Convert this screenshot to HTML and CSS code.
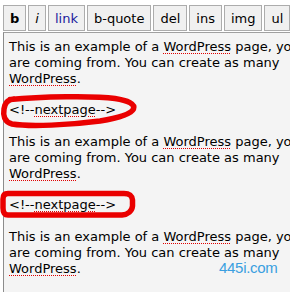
FILE: index.html
```html
<!DOCTYPE html>
<html>
<head>
<meta charset="utf-8">
<link rel="stylesheet" href="styles.css">
</head>
<body>
<div class="toolbar">
  <span class="btn btn-b">b</span>
  <span class="btn btn-i">i</span>
  <span class="btn btn-link">link</span>
  <span class="btn">b-quote</span>
  <span class="btn">del</span>
  <span class="btn">ins</span>
  <span class="btn">img</span>
  <span class="btn">ul</span>
  <span class="btn">ol</span>
</div>
<div class="editor">
<div class="line">This is an example of a <span class="sp">WordPress</span> page, you could edit this to put information about yourself or your site so readers know where you</div>
<div class="line">are coming from. You can create as many</div>
<div class="line"><span class="sp">WordPress</span>.</div>
<div class="line blank"></div>
<div class="line">&lt;!--<span class="sp">nextpage</span>--&gt;</div>
<div class="line blank"></div>
<div class="line">This is an example of a <span class="sp">WordPress</span> page, you could edit this to put information about yourself or your site so readers know where you</div>
<div class="line">are coming from. You can create as many</div>
<div class="line"><span class="sp">WordPress</span>.</div>
<div class="line blank"></div>
<div class="line">&lt;!--<span class="sp">nextpage</span>--&gt;</div>
<div class="line blank"></div>
<div class="line">This is an example of a <span class="sp">WordPress</span> page, you could edit this to put information about yourself or your site so readers know where you</div>
<div class="line">are coming from. You can create as many</div>
<div class="line"><span class="sp">WordPress</span>.</div>
</div>
<svg class="mark" width="290" height="292" viewBox="0 0 290 292">
  <path d="M10 99.5 C40 96.5 95 95.5 115 98.5 C128 100.5 135.5 104 133.5 109 C131 114 118 118 100 121 C70 125 30 127 12 124 C4 122 3 115 4 109 C5 103 7 100 14 99" />
  <path d="M8 193.5 L124 193.5 C130 193.5 132 196 132.5 200 L132.5 206 C132 211 128 214.5 122 215 L8 215 C4 215 3 212 3 208 L3 199 C3 195 5 193.5 8 193.5 Z" />
</svg>
<div class="watermark">445i.com</div>
</body>
</html>
```

FILE: styles.css
```css
html, body {
  margin: 0;
  padding: 0;
  background: #ffffff;
  width: 290px;
  height: 292px;
  overflow: hidden;
}
body {
  position: relative;
  font-family: "DejaVu Sans", Verdana, sans-serif;
  font-size: 13px;
  color: #000;
}
.toolbar {
  display: flex;
  gap: 2px;
  padding: 5px 0 0 3px;
  white-space: nowrap;
}
.btn {
  flex: none;
  display: flex;
  align-items: center;
  height: 24px;
  padding: 0 6px;
  border: 1px solid #acacac;
  background: #f0f0f0;
  color: #000;
}
.btn-b { font-weight: bold; }
.btn-i { font-style: italic; }
.btn-link { color: #1a1a9c; }
.editor {
  margin: 1px 0 0 3px;
  border-top: 1px solid #a0a0a0;
  border-left: 1px solid #8c8c8c;
  background: #f4f4f4;
  padding: 6px 0 0 5px;
  height: 300px;
  white-space: nowrap;
}
.line {
  line-height: 15.85px;
  height: 15.85px;
}
.sp {
  text-decoration: underline dotted #e00000;
  text-decoration-thickness: 1px;
  text-underline-offset: 2px;
}
.mark {
  position: absolute;
  left: 0;
  top: 0;
}
.mark path {
  fill: none;
  stroke: #ea0000;
  stroke-width: 5.5;
  stroke-linecap: round;
  stroke-linejoin: round;
}
.watermark {
  position: absolute;
  left: 219px;
  top: 259px;
  font-family: "Liberation Sans", Arial, sans-serif;
  font-size: 15px;
  letter-spacing: -0.3px;
  color: #3a9fe0;
}
```
